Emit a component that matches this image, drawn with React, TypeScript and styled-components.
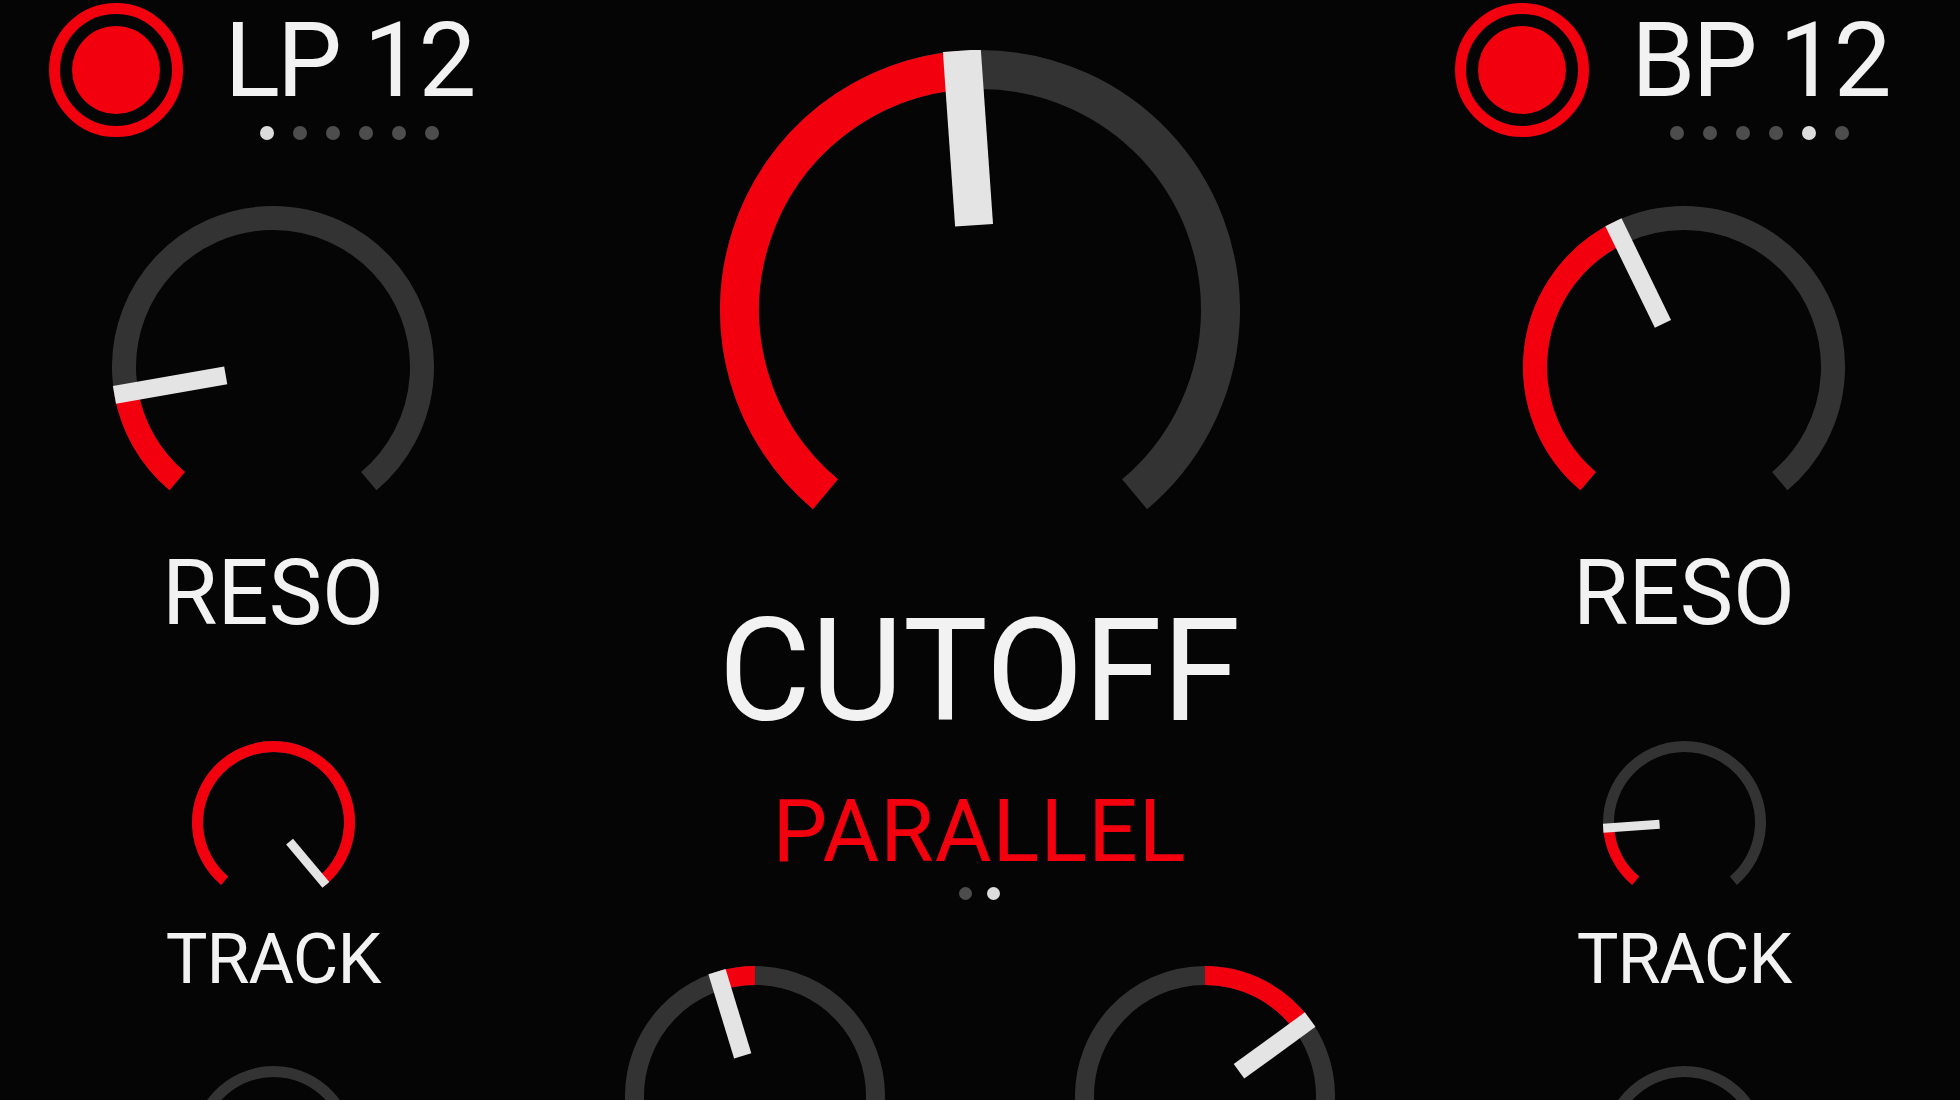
import React from "react";
import styled, { createGlobalStyle } from "styled-components";

const RED = "#f3000e";
const RING = "#333333";
const NEEDLE = "#e4e4e4";
const MIN_ANGLE = -140;
const MAX_ANGLE = 140;

const GlobalStyle = createGlobalStyle`
  html, body {
    margin: 0;
    padding: 0;
    background: #050505;
    overflow: hidden;
  }
  body {
    font-family: Roboto, "Liberation Sans", sans-serif;
    color: #f2f2f2;
  }
`;

const Screen = styled.div`
  display: grid;
  grid-template-columns: 546px 867px 542px;
  width: 1960px;
  height: 1100px;
  overflow: hidden;
  background: #050505;
`;

const Column = styled.div`
  display: flex;
  flex-direction: column;
  align-items: center;
`;

const Header = styled.div<{ $shift: number }>`
  display: flex;
  align-items: flex-start;
  gap: 42px;
  margin-top: 3px;
  padding-right: ${(p) => p.$shift}px;
`;

const TitleBlock = styled.div`
  display: flex;
  flex-direction: column;
  align-items: center;
  margin-top: 6px;
`;

const Title = styled.div`
  font-size: 103px;
  line-height: 1;
  font-weight: 400;
  letter-spacing: -3px;
  word-spacing: 2px;
  white-space: nowrap;
`;

const DotRow = styled.div<{ $top: number; $gap: number }>`
  display: flex;
  gap: ${(p) => p.$gap}px;
  margin-top: ${(p) => p.$top}px;
`;

const Dot = styled.span<{ $on: boolean; $size: number }>`
  width: ${(p) => p.$size}px;
  height: ${(p) => p.$size}px;
  border-radius: 50%;
  background: ${(p) => (p.$on ? "#dcdcdc" : "#4d4d4d")};
`;

const Label = styled.div<{ $size: number; $top: number; $red?: boolean; $spacing?: number }>`
  margin-top: ${(p) => p.$top}px;
  font-size: ${(p) => p.$size}px;
  line-height: 1;
  font-weight: 400;
  letter-spacing: ${(p) => p.$spacing ?? 0}px;
  color: ${(p) => (p.$red ? RED : "#f2f2f2")};
  white-space: nowrap;
`;

const KnobBox = styled.svg<{ $top: number }>`
  display: block;
  flex: none;
  margin-top: ${(p) => p.$top}px;
`;

const KnobPair = styled.div`
  display: flex;
  gap: 190px;
  margin-top: 66px;
`;

function polar(c: number, r: number, a: number): [number, number] {
  const rad = (a * Math.PI) / 180;
  return [c + r * Math.sin(rad), c - r * Math.cos(rad)];
}

function arcPath(c: number, r: number, a0: number, a1: number) {
  const [x0, y0] = polar(c, r, a0);
  const [x1, y1] = polar(c, r, a1);
  const large = a1 - a0 > 180 ? 1 : 0;
  return `M ${x0} ${y0} A ${r} ${r} 0 ${large} 1 ${x1} ${y1}`;
}

interface KnobProps {
  radius: number;
  stroke: number;
  angle: number;
  origin?: number;
  needleFrom: number;
  needleWidth: number;
  top: number;
}

const Knob = ({ radius, stroke, angle, origin = MIN_ANGLE, needleFrom, needleWidth, top }: KnobProps) => {
  const size = radius * 2;
  const c = radius;
  const r = radius - stroke / 2;
  const a0 = Math.min(origin, angle);
  const a1 = Math.max(origin, angle);
  const [nx0, ny0] = polar(c, needleFrom, angle);
  const [nx1, ny1] = polar(c, radius, angle);
  return (
    <KnobBox $top={top} width={size} height={size} viewBox={`0 0 ${size} ${size}`}>
      <path d={arcPath(c, r, MIN_ANGLE, MAX_ANGLE)} fill="none" stroke={RING} strokeWidth={stroke} />
      {a1 - a0 > 0.5 && (
        <path d={arcPath(c, r, a0, a1)} fill="none" stroke={RED} strokeWidth={stroke} />
      )}
      <line x1={nx0} y1={ny0} x2={nx1} y2={ny1} stroke={NEEDLE} strokeWidth={needleWidth} />
    </KnobBox>
  );
};

const RecordIcon = () => (
  <svg width={134} height={134} viewBox="0 0 134 134">
    <circle cx={67} cy={67} r={61.5} fill="none" stroke={RED} strokeWidth={11} />
    <circle cx={67} cy={67} r={44} fill={RED} />
  </svg>
);

const Dots = ({ count, active, top, size, gap }: { count: number; active: number; top: number; size: number; gap: number }) => (
  <DotRow $top={top} $gap={gap}>
    {Array.from({ length: count }).map((_, i) => (
      <Dot key={i} $on={i === active} $size={size} />
    ))}
  </DotRow>
);

interface FilterSideProps {
  name: string;
  preset: number;
  shift: number;
  reso: number;
  track: number;
}

const FilterSide = ({ name, preset, shift, reso, track }: FilterSideProps) => (
  <Column>
    <Header $shift={shift}>
      <RecordIcon />
      <TitleBlock>
        <Title>{name}</Title>
        <Dots count={6} active={preset} top={14} size={14} gap={19} />
      </TitleBlock>
    </Header>
    <Knob top={66} radius={161} stroke={24} angle={reso} needleFrom={48} needleWidth={18} />
    <Label $size={90} $top={21}>RESO</Label>
    <Knob top={102} radius={81.5} stroke={11} angle={track} needleFrom={25} needleWidth={9} />
    <Label $size={70} $top={20} $spacing={-1}>TRACK</Label>
    <Knob top={72} radius={81.5} stroke={11} angle={MIN_ANGLE} needleFrom={25} needleWidth={9} />
  </Column>
);

export default function App() {
  return (
    <>
      <GlobalStyle />
      <Screen>
        <FilterSide name="LP 12" preset={0} shift={24} reso={-100} track={140} />
        <Column>
          <Knob top={50} radius={260} stroke={39} angle={-4} needleFrom={85} needleWidth={38} />
          <Label $size={142} $top={31}>CUTOFF</Label>
          <Label $size={87} $top={45} $red $spacing={1}>PARALLEL</Label>
          <Dots count={2} active={1} top={12} size={13} gap={15} />
          <KnobPair>
            <Knob top={0} radius={130} stroke={19} angle={-17} origin={0} needleFrom={42} needleWidth={18} />
            <Knob top={0} radius={130} stroke={19} angle={54} origin={0} needleFrom={42} needleWidth={18} />
          </KnobPair>
        </Column>
        <FilterSide name="BP 12" preset={4} shift={24} reso={-26} track={-94} />
      </Screen>
    </>
  );
}
